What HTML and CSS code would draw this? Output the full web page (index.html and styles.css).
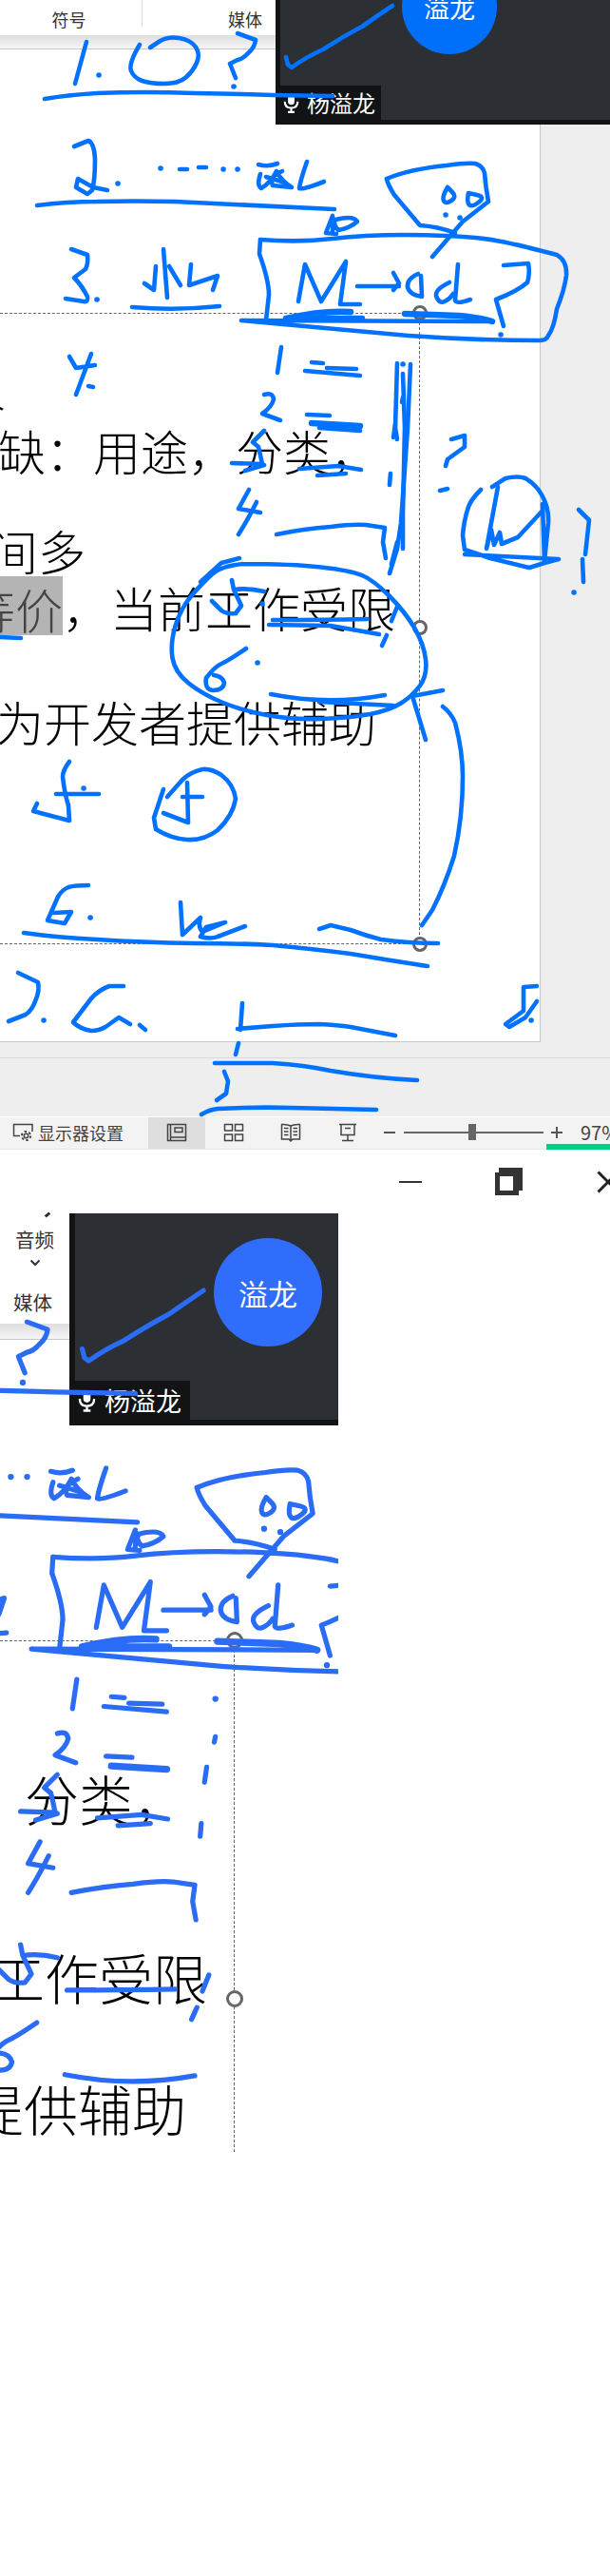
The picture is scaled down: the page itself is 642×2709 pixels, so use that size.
FILE: index.html
```html
<!DOCTYPE html>
<html lang="zh-CN">
<head>
<meta charset="utf-8">
<title>演示文稿</title>
<link rel="stylesheet" href="styles.css">
</head>
<body>
<section class="screen">
  <header class="ribbon">
    <div class="tab tab-symbol">符号</div>
    <div class="tab tab-media">媒体</div>
  </header>
  <div class="ribbon-shadow"></div>
  <div class="workspace">
    <article class="page">
      <div class="textbox textbox-full">
        <p class="line line-a1">人</p>
        <p class="line line-a2">缺：用途，分类，</p>
        <p class="line line-a3">间多</p>
        <p class="line line-a4"><span class="hl">等价</span>，当前工作受限</p>
        <p class="line line-a5">为开发者提供辅助</p>
        <span class="handle handle-top"></span>
        <span class="handle handle-mid"></span>
        <span class="handle handle-bottom"></span>
      </div>
    </article>
  </div>
  <div class="lower-band"></div>
  <footer class="status">
    <div class="display-settings">
      <svg class="icon-settings" viewBox="0 0 23 20"><path d="M8 13.5H1.5V1.5H21V9"/><circle cx="14.5" cy="13.5" r="2.2"/><circle class="gear" cx="14.5" cy="13.5" r="4.6"/></svg>
      <span>显示器设置</span>
    </div>
    <div class="views">
      <div class="view view-active"><svg viewBox="0 0 22 20"><path d="M1.500 1.500H20.500V18.500H1.500ZM4.500 1.500V18.500M4.500 15H20.500M9 5H17V9.500H9Z"/></svg></div>
      <div class="view"><svg viewBox="0 0 22 20"><path d="M1.500 1.500H9.500V8H1.500ZM12.500 1.500H20.500V8H12.500ZM1.500 12H9.500V18.500H1.500ZM12.500 12H20.500V18.500H12.500Z"/></svg></div>
      <div class="view"><svg viewBox="0 0 22 20"><path d="M1.500 1.500Q7 1 11 3Q15 1 20.500 1.500V17H13L11 19L9 17H1.500ZM11 3V18M4 5.500H8.500M4 9H8.500M4 12.500H8.500M13.500 5.500H18M13.500 9H18M13.500 12.500H18"/></svg></div>
      <div class="view"><svg viewBox="0 0 22 20"><path d="M2 1.500H20M4 1.500V12.500H18V1.500M11 12.500V18.500M5 18.500H17M8 5.500H14"/></svg></div>
    </div>
    <div class="zoomer">
      <span class="zoom-sign zoom-minus"></span>
      <div class="zoom-track"><span class="zoom-thumb"></span></div>
      <span class="zoom-sign zoom-plus"></span>
      <span class="zoom-value">97%</span>
    </div>
    <span class="net-bar"></span>
  </footer>
  <aside class="video video-a">
    <div class="avatar">溢龙</div>
    <div class="name-tag">
      <svg class="mic" viewBox="0 0 20 24"><rect x="6" y="1" width="8" height="13" rx="4"/><path d="M2 10Q2 18 10 18T18 10M10 18V23M6 23H14"/></svg>
      <span>杨溢龙</span>
    </div>
  </aside>
  <svg class="ink ink-a" viewBox="0 0 642 1209">
    <g id="early">
      <!-- tick and name line -->
      <path d="M301 60L303 68L307 71Q322 60 340 52Q362 38 381 28Q398 16 413 6"/>
      <path d="M47 104Q70 100 102 98Q150 96 205 98Q260 99 287 100L350 101"/>
      <path d="M250 35L269 42Q268 50 262 55Q256 62 250 63L242 67L248 82"/>
      <path class="dot" d="M246 91h.1"/>
      <!-- tel -->
      <path class="dot" d="M235 178h.1M250 178h.1"/>
      <path d="M272 173Q282 176 292 172M274 183Q270 195 275 198Q285 192 291 180Q296 190 307 197L287 195Q283 186 297 180M280 186L300 192"/>
      <path d="M323 170Q316 190 315 198Q318 200 341 191"/>
      <path d="M184 212L352 220"/>
      <path d="M350 227L343 245L354 246M353 231Q372 226 376 233Q368 240 356 242Q350 236 353 231M351 230L350 243"/>
      <!-- funnel -->
      <path d="M407 188Q430 178 470 174Q490 171 500 172Q508 174 510 182Q511 196 514 212L487 233L455 270"/>
      <path d="M407 188Q408 194 415 205L442 237Q460 238 479 245"/>
      <path d="M471 197Q465 207 467 211T475 211T476 202T471 197M493 203Q491 213 494 215.500T504 212.500T502 205T493 203"/>
      <path class="dot" d="M469 226h.1M484 229h.1"/>
      <!-- box -->
      <path d="M274 252C300 254 325 254 350 251S420 246 470 248S540 256 586 268Q597 274 596 290Q594 305 586 325Q583 345 577 353Q575 358 568 358Q500 358 430 353Q340 345 254 337L518 338"/>
      <path d="M274 252L273 267Q283 295 283 310L280 337"/>
      <path d="M530 279L556 277Q558 288 555 297Q545 306 522 315L530 343"/>
      <path class="dot" d="M527 352h.1"/>
      <path d="M314 317L321 278L338 317L364 275L358 320L379 320"/>
      <path d="M376 301H420M414 287L420 298L414 305"/>
      <path d="M440 288Q428 293 429 302Q431 310 444 312L443 290"/>
      <path d="M473 297Q458 304 459 311Q462 320 468 317Q474 314 477 309M482 278L479 316Q481 320 495 315"/>
      <path class="thick" d="M301 335Q340 326 369 328M301 335L381 335"/>
      <path class="thick" d="M426 330L483 332Q505 334 518 338"/>
      <!-- 3 -->
      <path d="M172 262L176 313M164 280L162 305L152 298M178 280L190 300M201 278L199 300L229 290L224 305"/>
      <path d="M139 323Q184 327 231 322"/>
      <!-- list 1 2 -->
      <path d="M296 365L292 392M328 381L340 382M321 390L379 395M344 387L375 388"/>
      <path class="dot" d="M424 383h.1"/>
      <path d="M278 415Q287 412 288 420Q286 428 276 435L295 442M323 436L347 437"/>
      <path class="thick" d="M328 445L379 448"/>
      <path d="M424 418L423 423M416 446L414 460"/>
      <path d="M411 498L410 510"/>
      <!-- over 分类 -->
      <path d="M244 487L276 488Q274 478 272 470L266 465L278 453M258 495L278 489"/>
      <path d="M315 493L356 490L380 494M334 500L364 498"/>
      <!-- 4 -->
      <path d="M262 515L251 535L274 539M270 528Q260 548 251 562"/>
      <path d="M291 562Q320 556 348 554Q370 551 385 552L405 555L403 570L406 587"/>
      <!-- 5 -->
      <path d="M244 610L246 620Q262 618 278 622M246 620L254 637L248 645Q238 646 233 642L223 632"/>
      <path d="M287 652Q340 652 387 651"/>
      <path d="M418 638L412 653M407 668L402 679"/>
      <!-- 6 -->
      <path d="M259 682Q240 695 233 698T217 713Q215 725 224 726Q235 726 236 718Q234 711 225 710"/>
      <path d="M285 730Q345 742 405 731"/>
    </g>
    <!-- 1 and circle -->
    <path d="M91 44L79 88"/>
    <path class="dot" d="M104 79h.1"/>
    <path d="M147 47Q135 67 138 74.500T149.500 85T173 88T195.500 81.500T207 66T206 49.500T188.500 40T167 44T158 50"/>
    <!-- 2 -->
    <path d="M78 154L93 148Q99 150 100 167Q100 190 97 200L92 204L80 197L82 188L98 197L113 200"/>
    <path class="dot" d="M124 193h.1M169 177h.1"/>
    <path d="M189 178H197M209 176H217"/>
    <path d="M39 216Q70 212 102 212Q140 211 184 212"/>
    <!-- 3. -->
    <path d="M75 262L92 268Q93 278 90 283L78 292Q86 300 92 312Q93 318 88 317L69 314"/>
    <path class="dot" d="M102 315h.1"/>
    <!-- 4. -->
    <path d="M96 372L80 415M73 375L80 387L100 384"/>
    <path d="M93 406L98 407"/>
    <!-- vertical scribble -->
    <path d="M418 382L416 450L418 462"/>
    <path d="M432 383L429 450L422 550L418 577L410 603"/>
    <path d="M424 393L426 450L424 540L424 577M412 593L418 570"/>
    <path d="M336 450L379 453M0 670L22 671"/>
    <path d="M475 462L489 458L489 470L471 483L469 490M463 516L471 514"/>
    <!-- square sketch -->
    <path d="M506 515Q496 525 493 533Q488 548 487 563L489 578L516 587L557 597L573 592L588 588L489 583"/>
    <path d="M518 512L532 503Q545 500 553 503Q565 510 571 522Q578 535 577 550L573 590L571 530"/>
    <path d="M524 512L512 577L517 557L520 573L526 560L528 572L545 565L571 537"/>
    <path d="M609 536L620 547L616 583M613 588L614 612"/>
    <path class="dot" d="M604 623h.1"/>
    <!-- big oval -->
    <path d="M256 593Q307 593 338 596.500T381 605T409.500 626.500T436 660T448 693.500T442 721T422 739.500T389.500 751T338 756T280.500 752T233.500 738.500T198.500 718.500T181.500 692T184.500 658.500T201.500 626.500T223 604T256 593"/>
    <path d="M252 587L233 592L211 612"/>
    <path d="M283 657L348 658L399 667"/>
    <path class="dot" d="M276 635h.1M271 697h.1"/>
    <path d="M336 738L414 742"/>
    <path d="M466 726L434 732L448 778"/>
    <path d="M466 743Q475 750 479 760Q487 790 487 817Q487 860 478 900Q468 932 455 957L444 973"/>
    <!-- 5. and circled 5 -->
    <path d="M73 801Q66 810 66 817Q68 835 72 847L73 863L35 853L39 845M59 835L104 835"/>
    <path class="dot" d="M88 829h.1"/>
    <path d="M172 830L162 860L164 872Q180 882 197 883Q215 884 229 873Q245 858 248 840Q246 825 233 815Q222 808 213 809Q200 812 192 820L176 838"/>
    <path d="M197 823L198 865L172 855M192 838L213 838"/>
    <!-- 6. -->
    <path d="M93 931Q78 931 72 933Q65 936 61 943L50 968L68 971L75 959L57 960"/>
    <path class="dot" d="M95 965h.1"/>
    <path d="M190 949L192 983L211 965Q208 975 213 980L237 970L217 975L211 985Q222 988 229 985L258 974"/>
    <path d="M25 981Q60 986 102 988Q150 991 205 992Q250 992 287 994Q330 998 369 1003Q410 1010 450 1016"/>
    <path d="M336 977L348 973L369 978Q385 984 401 988Q430 992 461 992"/>
    <!-- 7. G -->
    <path d="M19 1023L40 1033Q42 1042 37 1053Q34 1062 27 1067L9 1074"/>
    <path class="dot" d="M46 1073h.1"/>
    <path d="M130 1037L115 1037Q104 1041 96 1050L77 1075Q84 1082 96 1084Q104 1084 111 1080L125 1070L137 1077M147 1078L153 1083"/>
    <path d="M565 1037L551 1038L551 1063L532 1077L536 1080L553 1070L565 1053"/>
    <path class="dot" d="M559 1073h.1"/>
    <path d="M255 1055L253 1083M250 1082L287 1079Q315 1077 336 1077Q355 1078 369 1080L416 1089M251 1097L248 1109"/>
    <path d="M226 1118H287Q320 1120 348 1126Q395 1134 439 1136"/>
    <path d="M236 1127L240 1137L238 1150L228 1157"/>
    <path d="M212 1172Q220 1167 229 1166Q270 1164 307 1165L396 1167"/>
  </svg>
</section>

<section class="screen-b">
  <div class="titlebar">
    <svg class="win win-min" viewBox="0 0 24 2"><path d="M0 1H24"/></svg>
    <svg class="win win-restore" viewBox="0 0 29 29"><path class="solid" d="M0 5H4V0H29V24H25V29H0Z"/><path class="glass" d="M5 9H19V24H5Z"/></svg>
    <svg class="win win-close" viewBox="0 0 24 24"><path d="M1.500 1.500L22.500 22.500M22.500 1.500L1.500 22.500"/></svg>
  </div>
  <div class="side-ribbon">
    <span class="chev-tail"></span>
    <div class="side-tab">音频</div>
    <svg class="chev" viewBox="0 0 12 8"><path d="M1.500 1.500L6 6L10.500 1.500"/></svg>
    <div class="side-tab side-tab-media">媒体</div>
  </div>
  <div class="ribbon-shadow side-shadow"></div>
  <div class="textbox textbox-b">
    <p class="line-b line-b1">分类，</p>
    <p class="line-b line-b2">工作受限</p>
    <p class="line-b line-b3">提供辅助</p>
    <span class="handle handle-top"></span>
    <span class="handle handle-mid"></span>
  </div>
  <aside class="video video-b">
    <div class="avatar">溢龙</div>
    <div class="name-tag">
      <svg class="mic" viewBox="0 0 20 24"><rect x="6" y="1" width="8" height="13" rx="4"/><path d="M2 10Q2 18 10 18T18 10M10 18V23M6 23H14"/></svg>
      <span>杨溢龙</span>
    </div>
  </aside>
  <svg class="ink ink-b" viewBox="0 0 356 1500">
    <use href="#early" transform="translate(-256.300 141.300) scale(1.139)"/>
  </svg>
</section>
</body>
</html>
```

FILE: styles.css
```css
* { box-sizing: border-box; }
html, body { margin: 0; padding: 0; background: #fff; }
body {
  width: 642px;
  height: 2709px;
  overflow: hidden;
  font-family: "Noto Sans CJK SC", "Noto Sans", sans-serif;
  color: #000;
}
p { margin: 0; }

/* first capture */
.screen { position: relative; height: 1209px; overflow: hidden; display: flex; flex-direction: column; }

.ribbon { height: 37px; background: #fff; display: flex; flex: none; }
.tab { font-size: 18px; line-height: 40px; color: #333; text-align: center; height: 28px; }
.tab-symbol { width: 150px; border-right: 1px solid #dcdcdc; padding-right: 4px; }
.tab-media { width: 216px; }
.ribbon-shadow {
  flex: none;
  height: 15px;
  background: linear-gradient(#dedede, #f6f6f6);
  border-bottom: 1px solid #c8c8c8;
}

.workspace { flex: none; height: 1061px; background: #eee; border-bottom: 1px solid #d8d8d8; }
.page {
  width: 569px;
  height: 1044px;
  background: #fff;
  border-right: 1px solid #c8c8c8;
  border-bottom: 1px solid #c8c8c8;
  padding-top: 277px;
}
.textbox { position: relative; }
.textbox-full {
  width: 442px;
  height: 664px;
  border-top: 1px dashed #666;
  border-right: 1px dashed #666;
  border-bottom: 1px dashed #666;
}
.line { font-size: 50px; line-height: 60px; font-weight: 300; white-space: nowrap; }
.line-a1 { margin: 46px 0 0 -44px; }
.line-a2 { margin: 7px 0 0 -2px; }
.line-a3 { margin: 45px 0 0 -10px; }
.line-a4 { margin: 0 0 0 -34px; }
.line-a5 { margin: 60px 0 0 -4px; }
.hl {
  display: inline-block;
  height: 62px;
  line-height: 68px;
  background: #b4b4b4;
  color: #444;
  vertical-align: top;
  margin-top: -2px;
}

.handle {
  position: absolute;
  width: 16px;
  height: 16px;
  right: -9px;
  border: 3px solid #666;
  border-radius: 50%;
  background: #fff;
}
.handle-top { top: -9px; }
.handle-mid { top: 322px; }
.handle-bottom { bottom: -9px; }

.lower-band { flex: none; height: 62px; background: #eee; border-bottom: 1px solid #fff; }

.status {
  position: relative;
  flex: none;
  height: 34px;
  background: #f3f3f3;
  border-bottom: 1px solid #e8e8e8;
  display: flex;
  align-items: stretch;
  color: #444;
}
.display-settings { flex: none; width: 156px; display: flex; align-items: center; gap: 4px; padding: 0 0 2px 13px; font-size: 18px; }
.display-settings span { line-height: 30px; white-space: nowrap; }
.icon-settings { width: 23px; height: 20px; fill: none; stroke: #444; stroke-width: 1.500; flex: none; }
.icon-settings .gear { stroke-width: 2; stroke-dasharray: 2.500 2.300; }
.views { display: flex; flex: none; }
.view { width: 60px; display: flex; align-items: center; justify-content: center; padding-bottom: 1px; }
.view-active { background: #dedede; }
.view svg { width: 22px; height: 20px; fill: none; stroke: #444; stroke-width: 1.500; }
.zoomer { display: flex; align-items: center; flex: none; margin-left: 8px; padding-bottom: 1px; }
.zoom-sign { position: relative; width: 12px; height: 12px; display: block; flex: none; }
.zoom-sign::before { content: ""; position: absolute; left: 0; right: 0; top: 5px; height: 2px; background: #555; }
.zoom-plus::after { content: ""; position: absolute; top: 0; bottom: 0; left: 5px; width: 2px; background: #555; }
.zoom-track { position: relative; flex: none; width: 147px; height: 2px; margin: 0 8px 0 9px; background: #666; }
.zoom-thumb { position: absolute; left: 68px; top: -8px; width: 8px; height: 17px; background: #666; }
.zoom-value { font-size: 20px; line-height: 30px; margin-left: 19px; white-space: nowrap; color: #444; }
.net-bar { position: absolute; left: 575px; right: 0; bottom: -1px; height: 6px; background: #00d084; }

/* shared video tile */
.video {
  position: absolute;
  background: #2c2f33;
  border-left-style: solid;
  border-bottom-style: solid;
  border-color: #111315;
  overflow: hidden;
}
.avatar { position: absolute; border-radius: 50%; color: #fff; display: flex; align-items: center; justify-content: center; }
.name-tag { position: absolute; left: 0; background: #111315; color: #fff; display: flex; align-items: center; white-space: nowrap; }
.mic { flex: none; fill: #fff; }
.mic path { fill: none; stroke: #fff; stroke-width: 2.500; }

.video-a { left: 290px; top: 0; width: 352px; height: 131px; border-left-width: 5px; border-bottom-width: 5px; }
.video-a .avatar { left: 128px; top: -43px; width: 100px; height: 100px; background: #0070fb; font-size: 27px; }
.video-a .name-tag { bottom: 0; width: 106px; height: 36px; padding-left: 3px; gap: 8px; font-size: 24px; line-height: 36px; }
.video-a .mic { width: 17px; height: 21px; }

.video-b { left: 73px; top: 67px; width: 283px; height: 223px; border-left-width: 6px; border-bottom-width: 6px; }
.video-b .avatar { left: 146px; top: 26px; width: 114px; height: 114px; background: #316dfb; font-size: 31px; }
.video-b .name-tag { bottom: 0; width: 121px; height: 41px; padding-left: 3px; gap: 9px; font-size: 27px; line-height: 41px; }
.video-b .mic { width: 19px; height: 24px; }

/* pen annotations */
.ink {
  position: absolute;
  left: 0;
  top: 0;
  fill: none;
  stroke-width: 4.600;
  stroke-linecap: round;
  stroke-linejoin: round;
  pointer-events: none;
}
.ink .dot { stroke-width: 5.500; }
.ink .thick { stroke-width: 6.500; }
.ink-a { width: 642px; height: 1209px; stroke: #0072ff; }
.ink-b { width: 356px; height: 1500px; stroke: #2a6cf6; }

/* second capture */
.screen-b { position: relative; height: 1500px; overflow: hidden; }
.titlebar { display: flex; align-items: center; gap: 78px; height: 67px; padding-left: 420px; }
.win { flex: none; overflow: visible; }
.win-min { width: 24px; height: 2px; stroke: #333; stroke-width: 2; }
.win-restore { width: 29px; height: 29px; margin-left: -1px; }
.win-restore .solid { fill: #333; }
.win-restore .glass { fill: #fff; }
.win-close { width: 24px; height: 24px; fill: none; stroke: #222; stroke-width: 3; }

.side-ribbon { position: relative; width: 73px; height: 116px; padding-top: 12px; text-align: center; }
.side-tab { font-size: 20.500px; line-height: 30px; color: #333; }
.side-tab-media { margin-top: 22px; padding-right: 4px; }
.chev { display: block; width: 12px; height: 8px; margin: 6px auto 0; fill: none; stroke: #333; stroke-width: 2; }
.chev-tail { position: absolute; left: 47px; top: 0; width: 6px; height: 3px; background: #333; transform: rotate(-40deg); }
.side-shadow { width: 73px; height: 17px; }

.textbox-b {
  width: 247px;
  height: 538px;
  margin-top: 316px;
  border-top: 1px dashed #666;
  border-right: 1px dashed #666;
}
.line-b { font-size: 57px; line-height: 68px; font-weight: 300; white-space: nowrap; }
.line-b1 { margin: 130px 0 0 26px; }
.line-b2 { margin: 120px 0 0 -10px; }
.line-b3 { margin: 70px 0 0 -32px; }
.textbox-b .handle { width: 18px; height: 18px; right: -10px; }
.textbox-b .handle-top { top: -10px; }
.textbox-b .handle-mid { top: 367px; }
```
